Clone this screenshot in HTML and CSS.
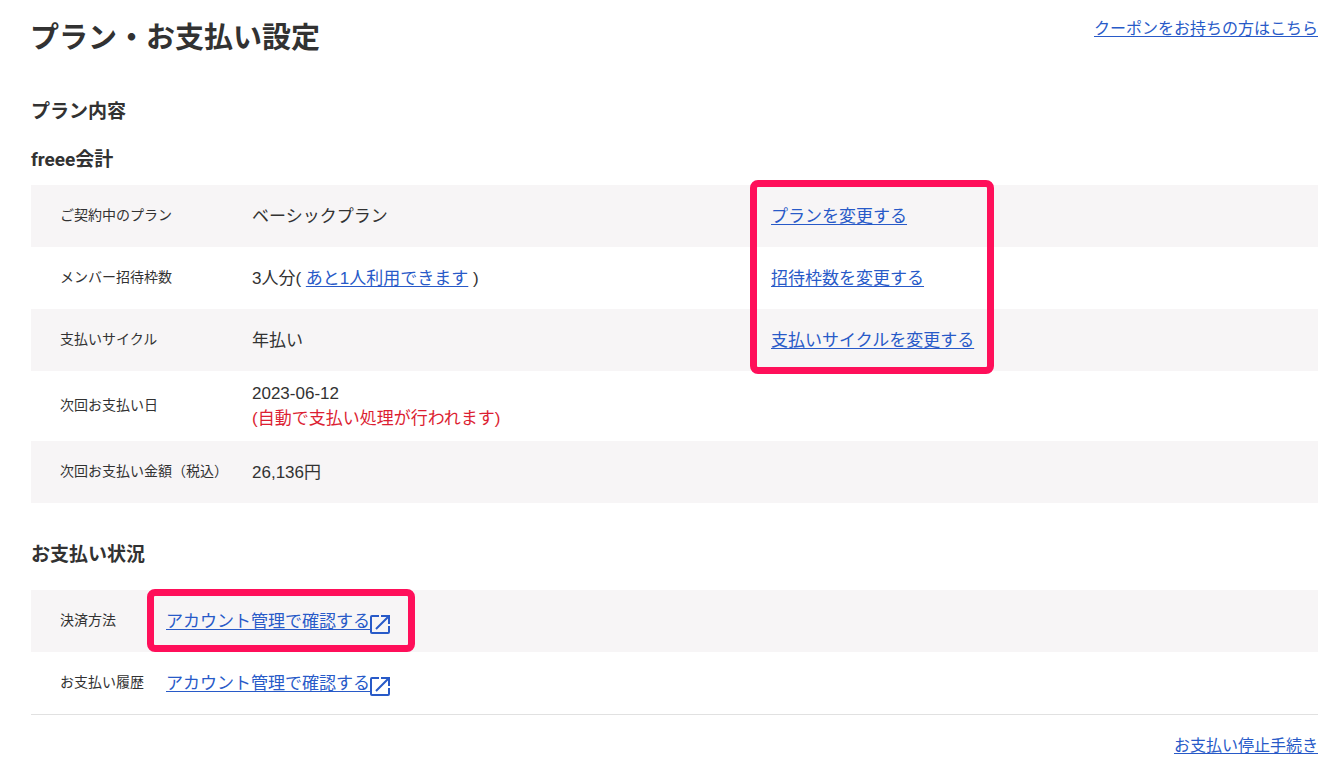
FILE: index.html
```html
<!DOCTYPE html>
<html lang="ja">
<head>
<meta charset="utf-8">
<meta name="viewport" content="width=device-width, initial-scale=1">
<title>プラン・お支払い設定</title>
<link rel="stylesheet" href="styles.css">
</head>
<body>
<svg class="symbols" aria-hidden="true">
  <symbol id="external" viewBox="0 0 20 20">
    <path d="M9 2H2Q1 2 1 3V18Q1 19 2 19H18Q19 19 19 18V12M11 2H19V10M18 3L6 15" fill="none" stroke="currentColor" stroke-width="2"/>
  </symbol>
</svg>
<main class="page">
  <header class="page-header">
    <h1 class="page-title">プラン・お支払い設定</h1>
    <a class="link small-link" href="#">クーポンをお持ちの方はこちら</a>
  </header>

  <section class="plan">
    <h2 class="heading">プラン内容</h2>
    <h3 class="heading product">freee会計</h3>
    <table class="table plan-table">
      <tbody>
        <tr>
          <th class="label" scope="row">ご契約中のプラン</th>
          <td>ベーシックプラン</td>
          <td class="action"><a class="link" href="#">プランを変更する</a><span class="highlight highlight-plan"></span></td>
        </tr>
        <tr>
          <th class="label" scope="row">メンバー招待枠数</th>
          <td>3人分( <a class="link" href="#">あと1人利用できます</a> )</td>
          <td class="action"><a class="link" href="#">招待枠数を変更する</a></td>
        </tr>
        <tr>
          <th class="label" scope="row">支払いサイクル</th>
          <td>年払い</td>
          <td class="action"><a class="link" href="#">支払いサイクルを変更する</a></td>
        </tr>
        <tr>
          <th class="label" scope="row">次回お支払い日</th>
          <td>2023-06-12<div class="notice">(自動で支払い処理が行われます)</div></td>
          <td class="action"></td>
        </tr>
        <tr>
          <th class="label" scope="row">次回お支払い金額（税込）</th>
          <td>26,136円</td>
          <td class="action"></td>
        </tr>
      </tbody>
    </table>
  </section>

  <section class="payment">
    <h2 class="heading">お支払い状況</h2>
    <table class="table payment-table">
      <tbody>
        <tr>
          <th class="label" scope="row">決済方法</th>
          <td class="account"><a class="account-link" href="#"><span class="link">アカウント管理で確認する</span><svg class="icon" aria-hidden="true"><use href="#external"/></svg></a><span class="highlight highlight-account"></span></td>
        </tr>
        <tr>
          <th class="label" scope="row">お支払い履歴</th>
          <td class="account"><a class="account-link" href="#"><span class="link">アカウント管理で確認する</span><svg class="icon" aria-hidden="true"><use href="#external"/></svg></a></td>
        </tr>
      </tbody>
    </table>
  </section>

  <footer class="page-footer">
    <a class="link small-link" href="#">お支払い停止手続き</a>
  </footer>
</main>
</body>
</html>
```

FILE: styles.css
```css
* {
  box-sizing: border-box;
}

body {
  margin: 0;
  background: #fff;
  color: #323232;
  font-family: "Liberation Sans", "Noto Sans CJK JP", sans-serif;
  font-size: 17px;
  line-height: 25px;
}

.symbols {
  display: none;
}

.page {
  padding: 16px 20px 12px 30px;
}

.page-header {
  display: flex;
  justify-content: space-between;
  align-items: flex-start;
}

.page-title {
  margin: 0;
  font-size: 29px;
  line-height: 44px;
}

.plan,
.payment {
  margin: 38px 0 0 1px;
}

.heading {
  margin: 0;
  font-family: Roboto, "Noto Sans CJK JP", sans-serif;
  font-size: 19px;
  line-height: 28px;
}

.heading.product {
  margin: 20px 0 11px;
}

.payment .heading {
  margin-bottom: 21px;
}

.link {
  color: #285ac8;
  text-decoration: underline;
  text-underline-offset: 2px;
  text-decoration-skip-ink: none;
}

.small-link {
  font-size: 16px;
}

.table {
  width: 100%;
  border-collapse: separate;
  border-spacing: 0;
  table-layout: fixed;
}

.table tr:nth-child(odd) {
  background: #f7f5f6;
}

.table th,
.table td {
  height: 62px;
  padding: 10px 0;
  text-align: left;
  vertical-align: middle;
}

.table .label {
  width: 221px;
  padding: 9px 0 11px 29px;
  font-size: 14px;
  font-weight: normal;
  white-space: nowrap;
}

.table .action {
  position: relative;
  width: 42.5%;
}

.notice {
  color: #dc1e32;
}

.payment-table {
  border-bottom: 1px solid #e1e1e1;
}

.payment-table .label {
  width: 135px;
}

.account {
  position: relative;
}

.account-link {
  display: inline-flex;
  align-items: center;
  color: #285ac8;
  text-decoration: none;
}

.icon {
  width: 20px;
  height: 20px;
  margin-top: 6px;
}

.highlight {
  position: absolute;
  border: 7px solid #ff0f5a;
  border-radius: 8px;
  pointer-events: none;
}

.highlight-plan {
  top: -5px;
  left: -21px;
  width: 244px;
  height: 194px;
}

.highlight-account {
  top: -1px;
  left: -19px;
  width: 268px;
  height: 63px;
}

.page-footer {
  display: flex;
  justify-content: flex-end;
  margin-top: 18px;
}
```
